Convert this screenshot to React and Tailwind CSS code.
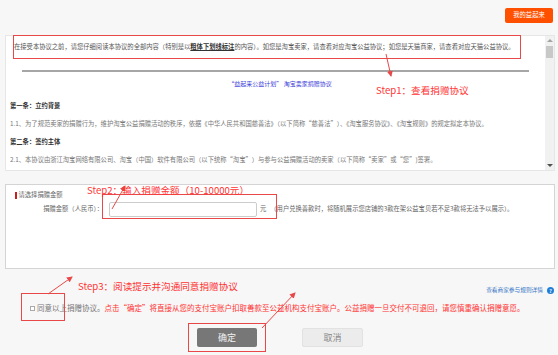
import React from 'react'

const red = '#e94848'

function Annotations() {
  return (
    <svg className="pointer-events-none absolute inset-0" width="558" height="355" viewBox="0 0 558 355">
      <defs>
        <marker id="head" markerWidth="6" markerHeight="6" refX="5" refY="3" orient="auto" markerUnits="userSpaceOnUse">
          <path d="M0,0 L6,3 L0,6 Z" fill={red} />
        </marker>
      </defs>
      <g fill="none" stroke={red} strokeWidth="1">
        <rect x="13.5" y="35.5" width="507" height="23" />
        <rect x="102.5" y="194.5" width="174" height="24" />
        <rect x="21.5" y="293.5" width="43" height="27" />
        <rect x="188.5" y="323.5" width="77" height="28" />
        <line x1="386" y1="54" x2="391" y2="76" markerEnd="url(#head)" />
        <line x1="112" y1="209" x2="125" y2="186" markerEnd="url(#head)" />
        <line x1="48" y1="294" x2="72" y2="277" markerEnd="url(#head)" />
        <line x1="262" y1="328" x2="295" y2="293" markerEnd="url(#head)" />
      </g>
    </svg>
  )
}

function StepLabel({ className, children }) {
  return (
    <div className={`pointer-events-none absolute h-[12px] whitespace-nowrap text-[9.6px] leading-[12px] text-[#f33] ${className}`}>
      {children}
    </div>
  )
}

export default function App() {
  return (
    <div className="relative h-[355px] w-[558px] overflow-hidden bg-[#f7f7f7] font-['Noto_Sans_CJK_SC','Liberation_Sans',sans-serif]">
      <div className="flex h-[35px] justify-end pr-[5px] pt-[8px]">
        <div className="flex h-[15px] w-[48px] items-center justify-center rounded-[2px] bg-[#ff5000] text-[6.3px] leading-none text-white">
          我的益起来
        </div>
      </div>

      <div className="ml-[5px] flex h-[136px] w-[550px] border border-[#e6e6e6] bg-white">
        <div className="flex-1 overflow-hidden pl-[4px] text-[6.3px] leading-[10px] text-[#777]">
          <p className="ml-[4px] mt-[6px] h-[10px] whitespace-nowrap text-[#555]">
            在接受本协议之前，请您仔细阅读本协议的全部内容（特别是以
            <span className="font-bold text-[#333] underline">粗体下划线标注</span>
            的内容）。如您是淘宝卖家，请查看对应淘宝公益协议；如您是天猫商家，请查看对应天猫公益协议。
          </p>
          <div className="ml-[12px] mt-[18px] h-[2px] w-[507px] bg-[#a6a6a6]" />
          <p className="mt-[7px] h-[10px] pl-[5px] text-center text-[6px] text-[#3b3bd9]">“益起来公益计划” 淘宝卖家捐赠协议</p>
          <p className="mt-[12px] h-[10px] font-bold text-[#333]">第一条：立约背景</p>
          <p className="mt-[8px] h-[10px] whitespace-nowrap">
            1.1、为了规范卖家的捐赠行为，维护淘宝公益捐赠活动的秩序，依据《中华人民共和国慈善法》（以下简称“慈善法”）、《淘宝服务协议》、《淘宝规则》的规定拟定本协议。
          </p>
          <p className="mt-[8px] h-[10px] font-bold text-[#333]">第二条：签约主体</p>
          <p className="mt-[8px] h-[10px] whitespace-nowrap">
            2.1、本协议由浙江淘宝网络有限公司、淘宝（中国）软件有限公司（以下统称“淘宝”）与参与公益捐赠活动的卖家（以下简称“卖家”或“您”)签署。
          </p>
        </div>
        <div className="flex w-[9px] flex-col items-center bg-[#f1f1f1]">
          <div className="mt-[3px] h-0 w-0 border-x-[3px] border-b-[3px] border-x-transparent border-b-[#a3a3a3]" />
          <div className="mt-[4px] h-[12px] w-[7px] bg-[#c8c8c8]" />
          <div className="flex-1" />
          <div className="mb-[3px] h-0 w-0 border-x-[3px] border-t-[3px] border-x-transparent border-t-[#505050]" />
        </div>
      </div>

      <div className="ml-[5px] mt-[13px] h-[85px] w-[550px] border border-[#d4d4d4] bg-white text-[6.3px] text-[#666]">
        <div className="ml-[9px] mt-[6px] flex h-[8px] items-center">
          <div className="h-[7px] w-[1.5px] bg-[#c81e1e]" />
          <span className="ml-[2px] leading-none">请选择捐赠金额</span>
        </div>
        <div className="mt-[3px] flex h-[15px] items-center">
          <span className="w-[97px] text-right leading-none">捐赠金额（人民币）：</span>
          <div className="ml-[6px] h-[15px] w-[148px] rounded-[2px] border border-[#ccc] bg-white" />
          <span className="ml-[3px] leading-none">元</span>
          <span className="ml-[4px] whitespace-nowrap leading-none">
            （用户兑换善款时，将随机展示您店铺的3款在架公益宝贝若不足3款将无法予以展示）。
          </span>
        </div>
      </div>

      <div className="flex h-[25px] items-end justify-end pr-[4px]">
        <div className="flex h-[8px] items-center gap-[4px]">
          <span className="text-[5.7px] leading-none text-[#3a79c8]">查看商家参与规则详情</span>
          <span className="flex h-[7px] w-[7px] items-center justify-center rounded-full bg-[#1f7fd8] text-[5px] font-bold leading-none text-white">?</span>
        </div>
      </div>
      <div className="mt-[9px] flex h-[10px] items-center pl-[30px] text-[7.5px] leading-none">
        <div className="h-[5px] w-[5px] border border-[#aaa] bg-white" />
        <span className="ml-[2px] text-[#777]">同意以上捐赠协议。</span>
        <span className="whitespace-nowrap text-[#f33]">
          点击“确定”将直接从您的支付宝账户扣取善款至公益机构支付宝账户。公益捐赠一旦交付不可退回，请您慎重确认捐赠意愿。
        </span>
      </div>
      <div className="mt-[15px] flex gap-[45px] pl-[197px]">
        <div className="flex h-[19px] w-[60px] items-center justify-center rounded-[2px] bg-[#777] text-[9px] leading-none text-[#f2f2f2]">
          确定
        </div>
        <div className="flex h-[19px] w-[61px] items-center justify-center rounded-[2px] border border-[#e2e2e2] bg-[#ececec] text-[9px] leading-none text-[#888]">
          取消
        </div>
      </div>

      <Annotations />
      <StepLabel className="left-[376px] top-[84px]">Step1：查看捐赠协议</StepLabel>
      <StepLabel className="left-[87px] top-[184px]">Step2：输入捐赠金额（10-10000元）</StepLabel>
      <StepLabel className="left-[78px] top-[280px]">Step3：阅读提示并沟通同意捐赠协议</StepLabel>
    </div>
  )
}
